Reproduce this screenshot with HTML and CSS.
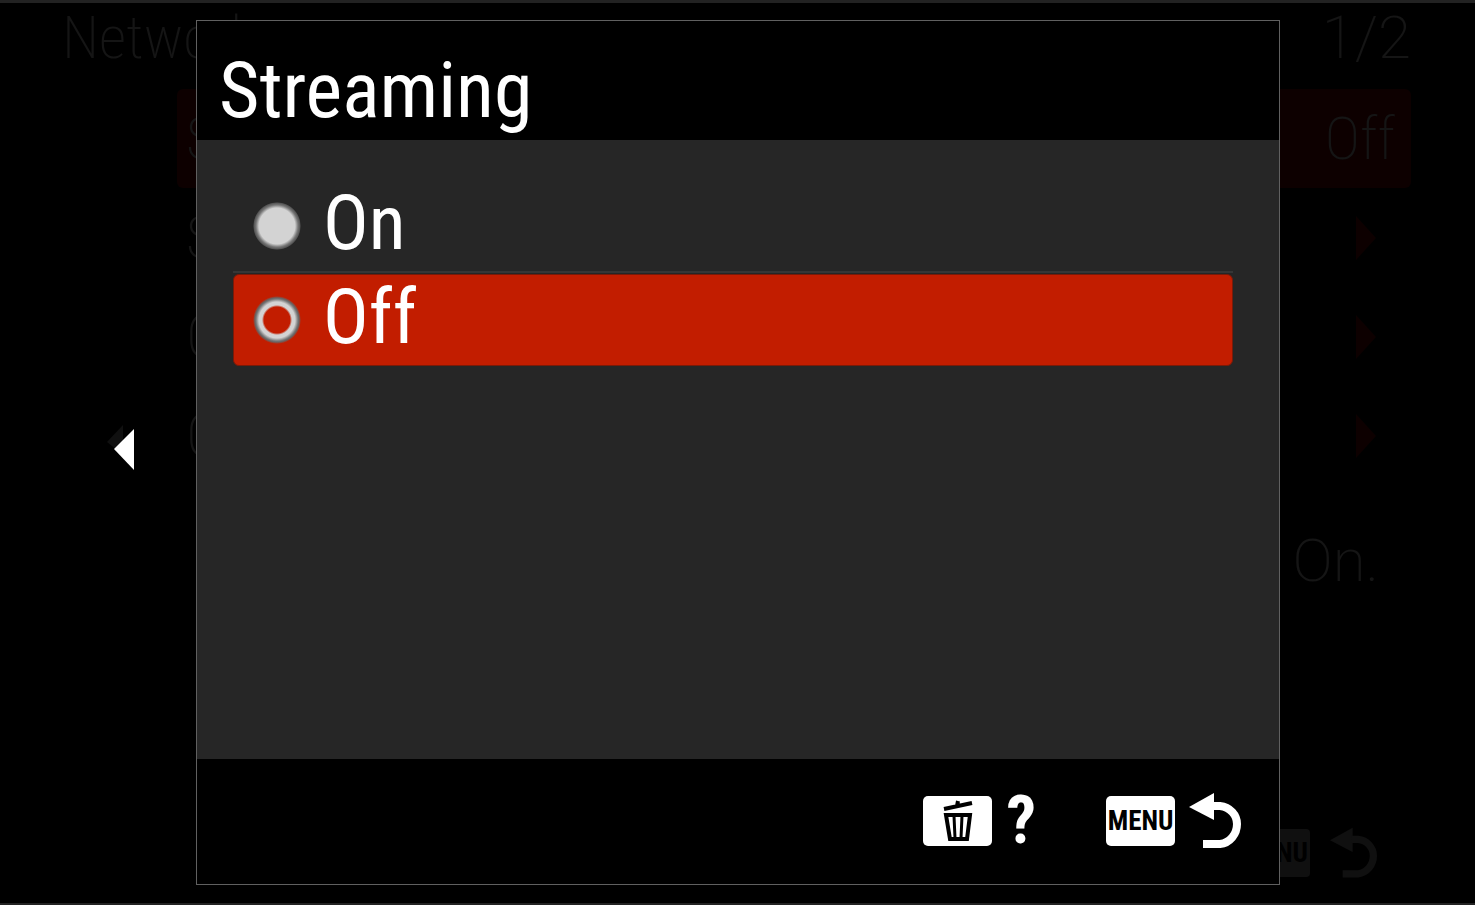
FILE: index.html
```html
<!DOCTYPE html>
<html lang="en">
<head>
<meta charset="utf-8">
<meta name="viewport" content="width=device-width, initial-scale=1">
<title>Streaming</title>
<link rel="stylesheet" href="styles.css">
</head>
<body>
<div class="camera">
  <div class="menu" aria-hidden="true">
    <div class="menu-head"><span class="menu-title">Network</span><span class="wide">1/2</span></div>
    <div class="menu-list">
      <div class="menu-row current"><span>S</span><span class="menu-value">Off</span></div>
      <div class="menu-row"><span>S</span><svg class="chevron" viewBox="0 0 20 44"><path d="M0 0L20 22L0 44Z"/></svg></div>
      <div class="menu-row"><span>C</span><svg class="chevron" viewBox="0 0 20 44"><path d="M0 0L20 22L0 44Z"/></svg></div>
      <div class="menu-row"><span>C</span><svg class="chevron" viewBox="0 0 20 44"><path d="M0 0L20 22L0 44Z"/></svg></div>
    </div>
    <p class="menu-note wide">On.</p>
    <div class="menu-foot">
      <span class="menu-key">MENU</span>
      <svg class="back" viewBox="0 0 52 56"><path class="back-head" d="M0 14L25 0V27Z"/><path class="back-line" d="M24 13H31C41 14 48 22 48 31C48 41 41 50 31 51H14"/></svg>
    </div>
  </div>

  <button class="previous" type="button" aria-label="Previous page">
    <svg viewBox="0 0 28 46"><path class="shade" d="M16 0V30L0 17Z"/><path class="arrow" d="M27 4V45L7 24Z"/></svg>
  </button>

  <section class="dialog" role="dialog" aria-labelledby="dialog-title">
    <header class="dialog-head"><h1 id="dialog-title">Streaming</h1></header>
    <form class="options">
      <label class="option" for="on"><input type="radio" name="streaming" id="on" checked><span class="option-text">On</span></label>
      <label class="option selected" for="off"><input type="radio" name="streaming" id="off"><span class="option-text">Off</span></label>
    </form>
    <footer class="dialog-foot">
      <button class="action" type="button" aria-label="Help">
        <span class="key">
          <svg class="trash" viewBox="0 0 30 44">
            <path d="M1 10L29 4M14 7L15 2" fill="none" stroke="#000" stroke-width="4"/>
            <path d="M3 16H27L24 40H7Z" fill="#fff" stroke="#000" stroke-width="4"/>
            <path d="M11 17L12 39M19 17L18 39" stroke="#000" stroke-width="3"/>
          </svg>
        </span>
        <span class="question">?</span>
      </button>
      <button class="action" type="button" aria-label="Menu, back">
        <span class="key">MENU</span>
        <svg class="back" viewBox="0 0 52 56"><path class="back-head" d="M0 14L25 0V27Z"/><path class="back-line" d="M24 13H31C41 14 48 22 48 31C48 41 41 50 31 51H14"/></svg>
      </button>
    </footer>
  </section>
</div>
</body>
</html>
```
FILE: styles.css
```css
* { box-sizing: border-box; }
body {
  margin: 0;
  background: #000;
  color: #fff;
  font-family: "Roboto Condensed", "Liberation Sans Narrow", "Liberation Sans", sans-serif;
}
.camera {
  position: relative;
  min-height: 100vh;
  display: flex;
  border-top: 3px solid #222;
  border-bottom: 2px solid #222;
  overflow: hidden;
}
.menu {
  flex: 1;
  display: flex;
  flex-direction: column;
  color: #151515;
  font-size: 60px;
  font-weight: 200;
  line-height: 1;
}
.menu-head {
  height: 86px;
  padding: 5px 64px 0 62px;
  display: flex;
  justify-content: space-between;
}
.wide { font-family: Roboto, sans-serif; }
.menu-list { padding: 0 64px 0 177px; }
.menu-row {
  height: 99px;
  padding: 0 35px 0 9px;
  display: flex;
  align-items: center;
  justify-content: space-between;
}
.current {
  background: #0d0000;
  border-radius: 6px;
  padding-right: 16px;
}
.menu-value { font-size: 60px; line-height: 64px; }
.chevron { width: 20px; height: 44px; fill: #0d0000; }
.menu-note { margin: 46px 96px 0 0; text-align: right; }
.menu-foot {
  margin-top: auto;
  padding: 0 98px 24px 0;
  display: flex;
  justify-content: flex-end;
  align-items: center;
  gap: 20px;
}
.menu-key {
  height: 48px;
  width: 70px;
  border-radius: 4px;
  background: #101010;
  color: #000;
  font-size: 27px;
  font-weight: 700;
  line-height: 48px;
  text-align: center;
}
.back { width: 52px; height: 56px; }
.back-head { fill: currentColor; }
.back-line { fill: none; stroke: currentColor; stroke-width: 8; }
.menu .back { width: 47px; height: 52px; color: #101010; }

button { font: inherit; color: inherit; background: none; border: 0; padding: 0; }
.previous {
  position: absolute;
  left: 107px;
  top: 50%;
  margin-top: -28px;
  width: 28px;
  height: 46px;
}
.previous svg { display: block; width: 28px; height: 46px; }
.shade { fill: #101010; }
.arrow { fill: #fff; }

.dialog {
  position: absolute;
  inset: 17px 195px 18px 196px;
  display: flex;
  flex-direction: column;
  background: #000;
  border: 1px solid #606060;
}
.dialog-head {
  height: 119px;
  padding: 26px 22px 0;
}
h1 {
  margin: 0;
  font-size: 78px;
  line-height: 88px;
  font-weight: 400;
}
.options {
  flex: 1;
  padding: 40px 46px 0 36px;
  background: #262626;
}
.option {
  height: 93px;
  padding-left: 20px;
  display: flex;
  align-items: center;
  gap: 22px;
  border-bottom: 2px solid #363636;
}
.selected {
  margin-top: 1px;
  height: 92px;
  padding-left: 19px;
  background: #c21d00;
  border: 1px solid #7a1a08;
  border-radius: 6px;
}
.option input {
  appearance: none;
  flex: none;
  width: 48px;
  height: 48px;
  margin: 0;
  border-radius: 50%;
  background: radial-gradient(circle, #c21d00 13px, #d3d3d3 15px, #d3d3d3 18px, #777 21px, #666 22px, #66666600 24px);
}
.option input:checked {
  background: radial-gradient(circle, #d3d3d3 18px, #777 21px, #555 23px, #55555500 24px);
}
.option-text {
  padding-bottom: 6px;
  font-size: 76px;
  line-height: 84px;
}
.dialog-foot {
  height: 125px;
  padding: 0 38px 2px 0;
  display: flex;
  justify-content: flex-end;
  align-items: center;
  gap: 70px;
}
.action { display: flex; align-items: center; gap: 14px; }
.key {
  width: 69px;
  height: 50px;
  border-radius: 5px;
  background: #fff;
  color: #000;
  display: flex;
  align-items: center;
  justify-content: center;
  font-size: 27px;
  font-weight: 700;
}
.trash { width: 30px; height: 44px; }
.question {
  font-size: 66px;
  line-height: 66px;
  font-weight: 700;
}
```
